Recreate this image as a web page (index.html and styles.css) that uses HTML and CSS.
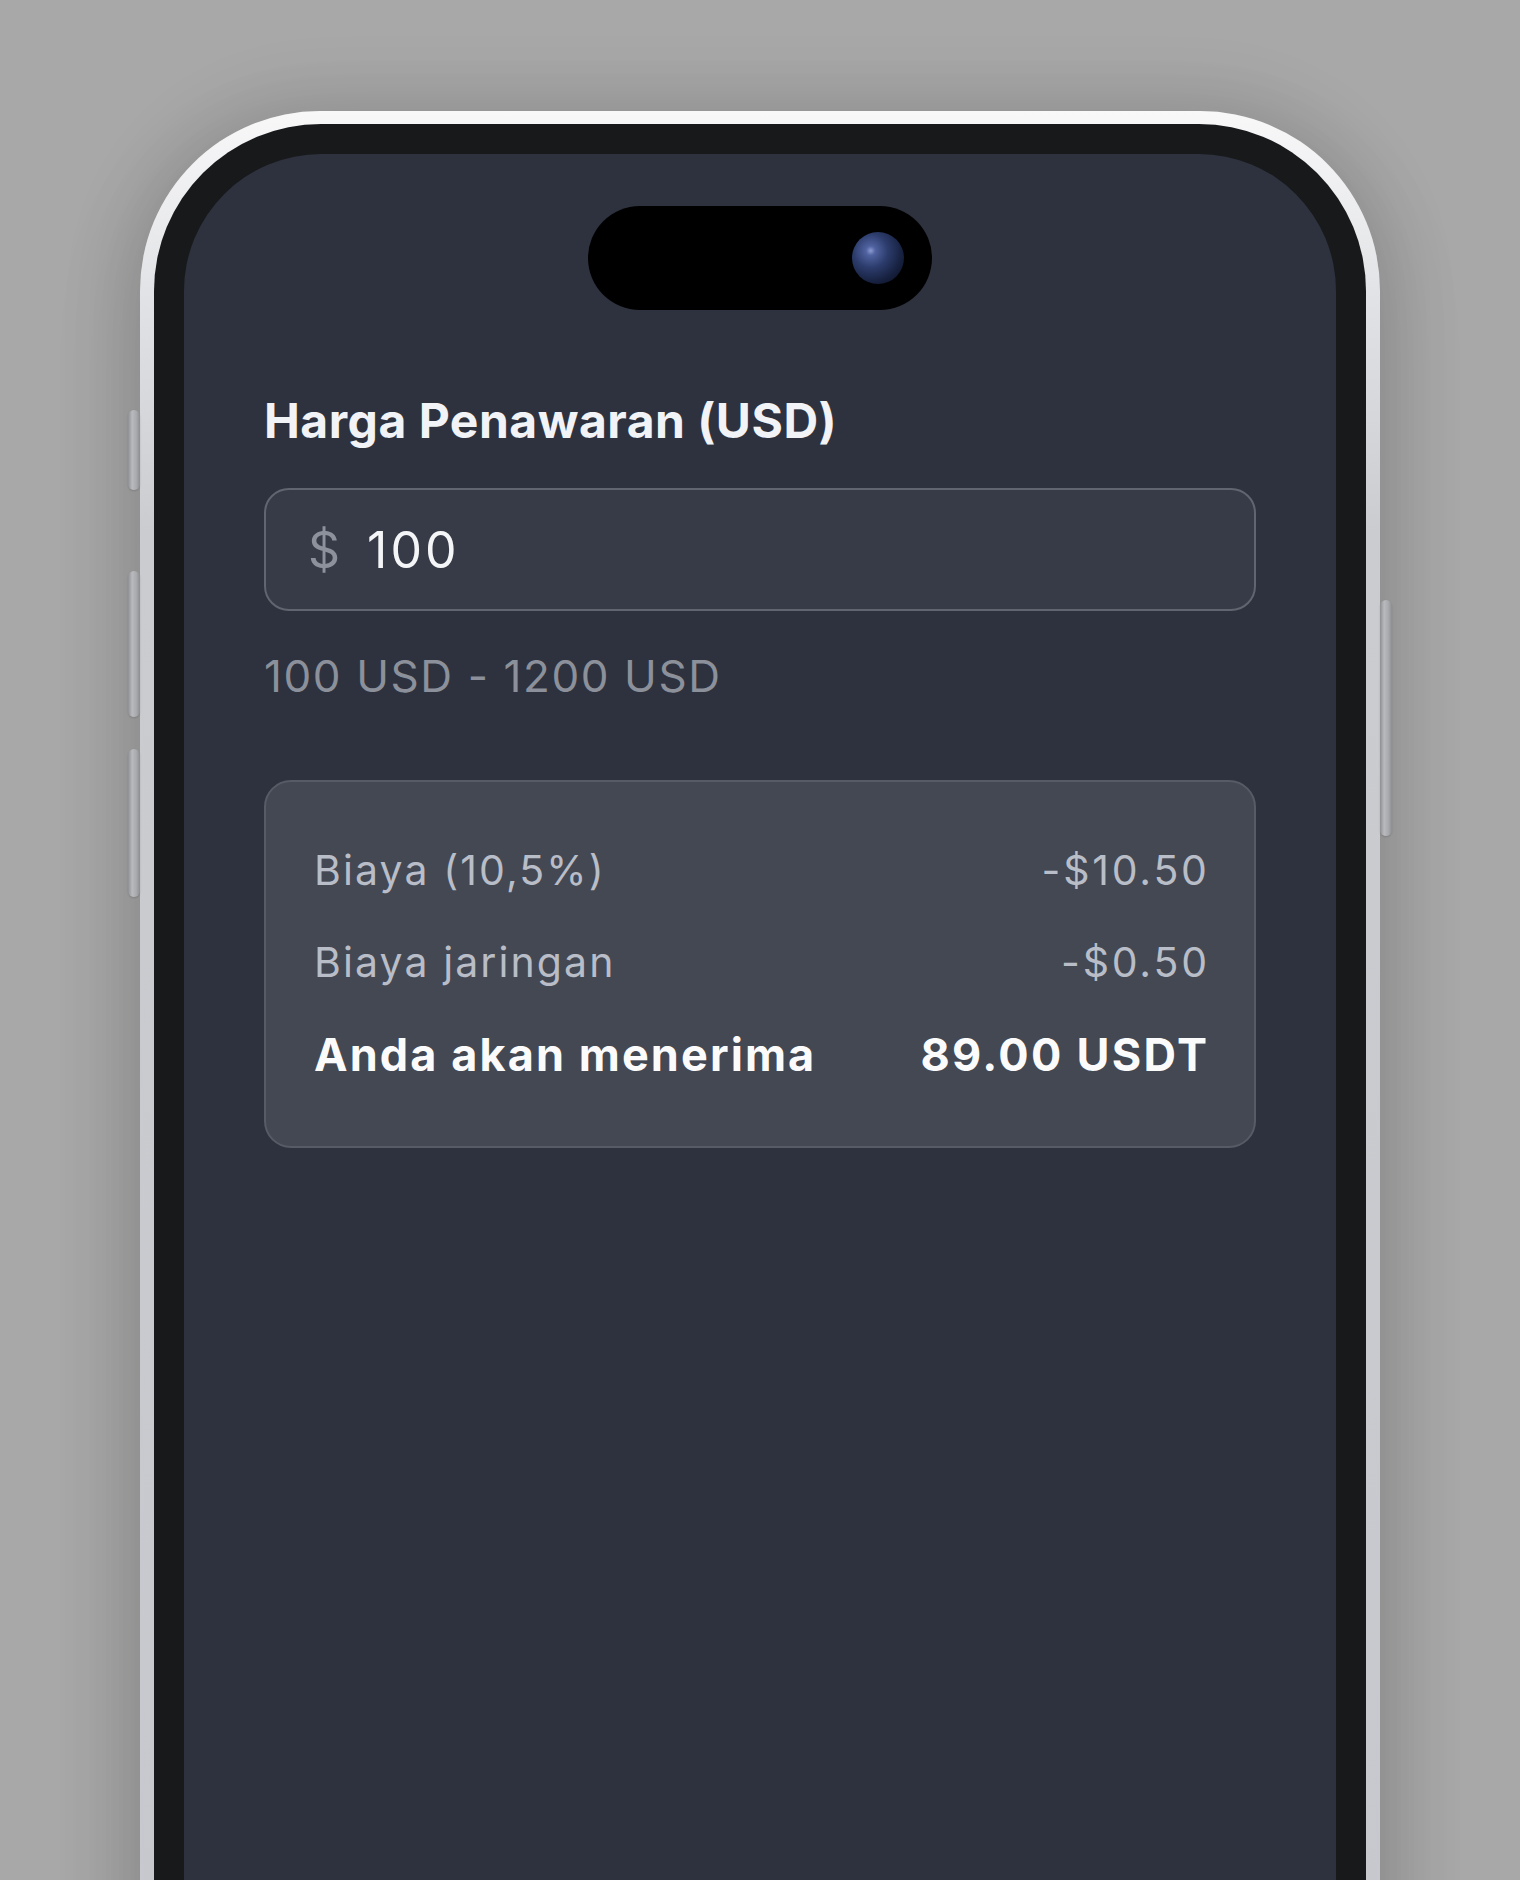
FILE: index.html
```html
<!doctype html>
<html>
<head>
  <meta charset="utf-8">
  <title>Harga Penawaran</title>
  <link rel="stylesheet" href="styles.css">
</head>
<body>
  <div class="stage">
    <div class="phone">
      <span class="btn btn-action"></span>
      <span class="btn btn-vol-up"></span>
      <span class="btn btn-vol-down"></span>
      <span class="btn btn-power"></span>

      <div class="bezel">
        <div class="screen">
          <div class="island">
            <span class="camera"></span>
          </div>

          <main class="offer">
            <h1 class="offer-title">Harga Penawaran (USD)</h1>

            <label class="amount">
              <span class="amount-prefix">$</span>
              <span class="amount-value">100</span>
            </label>

            <p class="amount-range">100 USD - 1200 USD</p>

            <section class="summary">
              <div class="summary-row">
                <span class="summary-label">Biaya (10,5%)</span>
                <span class="summary-value">-$10.50</span>
              </div>
              <div class="summary-row">
                <span class="summary-label">Biaya jaringan</span>
                <span class="summary-value">-$0.50</span>
              </div>
              <div class="summary-row summary-total">
                <span>Anda akan menerima</span>
                <span class="summary-value">89.00 USDT</span>
              </div>
            </section>
          </main>
        </div>
      </div>
    </div>
  </div>
</body>
</html>
```

FILE: styles.css
```css
html, body {
  height: 100%;
}

body {
  margin: 0;
  background: #a8a8a8;
  font-family: Inter, "Noto Sans", sans-serif;
  overflow: hidden;
}

.stage {
  padding: 111px 0 0 140px;
}

/* device frame */
.phone {
  position: relative;
  width: 1240px;
  height: 1900px;
  box-sizing: border-box;
  padding: 13px 14px 0;
  border-radius: 180px 180px 0 0;
  background: linear-gradient(180deg, #f8f8f9 0, #e2e3e6 180px, #cbccd0 420px, #c7c8cd 100%);
  box-shadow: 0 0 70px 14px rgba(0, 0, 0, 0.11), 0 30px 90px rgba(0, 0, 0, 0.12);
}

.btn {
  position: absolute;
  width: 12px;
  border-radius: 6px;
  background: linear-gradient(90deg, #8e8f93 0, #b9babe 35%, #a9aaae 70%, #8c8d91 100%);
  box-shadow: 0 1px 2px rgba(0, 0, 0, 0.15);
}

.btn-action   { left: -12px; top: 299px; height: 80px; }
.btn-vol-up   { left: -12px; top: 460px; height: 146px; }
.btn-vol-down { left: -12px; top: 638px; height: 148px; }
.btn-power    { right: -12px; top: 489px; height: 236px; }

.bezel {
  height: 100%;
  box-sizing: border-box;
  padding: 30px 30px 0;
  border-radius: 167px 167px 0 0;
  background: #18191b;
}

.screen {
  height: 100%;
  border-radius: 137px 137px 0 0;
  background: #2e323e;
  padding-top: 52px;
  box-sizing: border-box;
}

.island {
  width: 344px;
  height: 104px;
  margin: 0 auto;
  border-radius: 52px;
  background: #000;
  display: flex;
  align-items: center;
  justify-content: flex-end;
  padding-right: 28px;
  box-sizing: border-box;
}

.camera {
  width: 52px;
  height: 52px;
  border-radius: 50%;
  background: radial-gradient(circle at 36% 36%, #8b9bd2 0, #5062a0 10%, #2c3c6c 36%, #172140 66%, #070a16 100%);
}

/* offer form */
.offer {
  padding: 82px 80px 0;
}

.offer-title {
  margin: 0;
  font-size: 48px;
  line-height: 58px;
  font-weight: 700;
  letter-spacing: 0.5px;
  color: #f1f3f6;
}

.amount {
  margin-top: 38px;
  height: 123px;
  box-sizing: border-box;
  display: flex;
  align-items: center;
  padding-left: 42px;
  border: 2px solid #60656f;
  border-radius: 25px;
  background: #363b47;
  font-size: 50px;
}

.amount-prefix {
  color: #8c919b;
  margin-right: 27px;
}

.amount-value {
  color: #f4f5f7;
  letter-spacing: 3px;
}

.amount-range {
  margin: 39px 0 0;
  font-size: 44px;
  line-height: 53px;
  letter-spacing: 1.6px;
  color: #8b909a;
}

.summary {
  margin-top: 77px;
  padding: 42px 47px 46px 48px;
  border: 2px solid #565b66;
  border-radius: 27px;
  background: #434853;
}

.summary-row {
  display: flex;
  justify-content: space-between;
  align-items: center;
  height: 92px;
  font-size: 41px;
  color: #b8bdc7;
}

.summary-label {
  letter-spacing: 2.1px;
}

.summary-value {
  letter-spacing: 2.8px;
  margin-right: -2.8px;
}

.summary-total {
  font-size: 45px;
  font-weight: 700;
  letter-spacing: 2.1px;
  color: #fbfbfc;
}

.summary-total .summary-value {
  letter-spacing: 2.3px;
  margin-right: -2.3px;
}
```
